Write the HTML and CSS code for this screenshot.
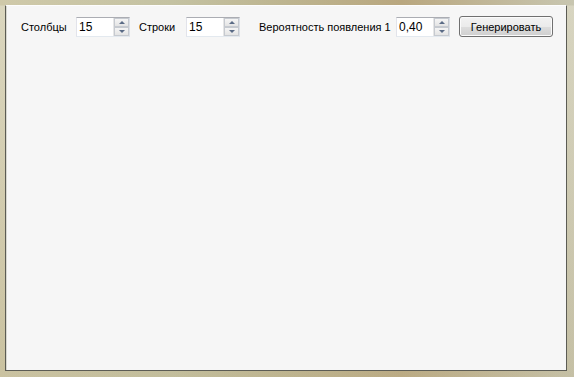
FILE: index.html
```html
<!DOCTYPE html>
<html lang="ru">
<head>
    <meta charset="UTF-8">
    <title>Генератор</title>
    <link rel="stylesheet" href="styles.css">
</head>
<body>
    <div class="frame">
        <div class="client">
            <div class="toolbar">
                <label class="caption caption-cols">Столбцы</label>
                <div class="spin">
                    <input class="spin-value" type="text" value="15">
                    <div class="spin-buttons">
                        <span class="spin-up"></span>
                        <span class="spin-down"></span>
                    </div>
                </div>
                <label class="caption caption-rows">Строки</label>
                <div class="spin">
                    <input class="spin-value" type="text" value="15">
                    <div class="spin-buttons">
                        <span class="spin-up"></span>
                        <span class="spin-down"></span>
                    </div>
                </div>
                <label class="caption caption-prob">Вероятность появления 1</label>
                <div class="spin">
                    <input class="spin-value" type="text" value="0,40">
                    <div class="spin-buttons">
                        <span class="spin-up"></span>
                        <span class="spin-down"></span>
                    </div>
                </div>
                <button class="generate">Генерировать</button>
            </div>
        </div>
    </div>
</body>
</html>
```
FILE: styles.css
```css
html, body {
    margin: 0;
    padding: 0;
    height: 100%;
}

body {
    background: linear-gradient(90deg, #cfc9a9 0%, #c4c2a2 30%, #bdb48f 50%, #b9a77f 70%, #c8c6b0 100%);
    font-family: "Liberation Sans", Arial, sans-serif;
    font-size: 11px;
    color: #000;
}

.frame {
    height: 100%;
    box-sizing: border-box;
    padding: 5px 7px 6px 5px;
    background: linear-gradient(180deg, rgba(235, 233, 222, 0) 0px, rgba(235, 233, 222, 0) 5px, rgba(226, 223, 204, 0.6) 6px, rgba(190, 178, 140, 0.3) 100%);
}

.client {
    height: 100%;
    box-sizing: border-box;
    background: #f6f6f6;
    border: 1px solid #5c5c54;
    border-top-color: #fdfdfd;
    box-shadow: inset 1px 0 0 #d8d8d0;
}

.toolbar {
    display: flex;
    align-items: center;
    padding: 10px 0 0 15px;
}

.caption {
    flex: none;
    line-height: 20px;
    white-space: nowrap;
}

.caption-cols {
    width: 55px;
}

.caption-rows {
    width: 47px;
    margin-left: 9px;
}

.caption-prob {
    width: 137px;
    margin-left: 19px;
}

.spin {
    flex: none;
    display: flex;
    width: 54px;
    height: 20px;
    box-sizing: border-box;
    border: 1px solid #abadb3;
    border-left-color: #e2e3ea;
    border-right-color: #dbdfe6;
    border-bottom-color: #e3e9ef;
    background: #fff;
}

.spin-value {
    flex: 1;
    min-width: 0;
    border: none;
    padding: 0 0 0 2px;
    margin: 0;
    font: inherit;
    font-size: 12px;
    color: #000;
    background: transparent;
    outline: none;
}

.spin-buttons {
    display: flex;
    flex-direction: column;
    width: 15px;
    border-left: 1px solid #e6e6e6;
}

.spin-up,
.spin-down {
    flex: 1;
    position: relative;
    border: 1px solid #c6cad0;
    background: linear-gradient(180deg, #f5f5f5, #e4e4e4);
}

.spin-up::after,
.spin-down::after {
    content: "";
    position: absolute;
    left: 4px;
    top: 2px;
    border-left: 3px solid transparent;
    border-right: 3px solid transparent;
}

.spin-up::after {
    border-bottom: 3px solid #5a6b86;
}

.spin-down::after {
    border-top: 3px solid #5a6b86;
}

.generate {
    flex: none;
    margin-left: 9px;
    width: 94px;
    height: 21px;
    padding: 0;
    font: inherit;
    font-size: 11px;
    color: #000;
    border: 1px solid #707070;
    border-radius: 3px;
    background: linear-gradient(180deg, #f2f2f2 0%, #ebebeb 50%, #dddddd 51%, #cfcfcf 100%);
    box-shadow: inset 0 0 0 1px #fbfbfb;
}
```
